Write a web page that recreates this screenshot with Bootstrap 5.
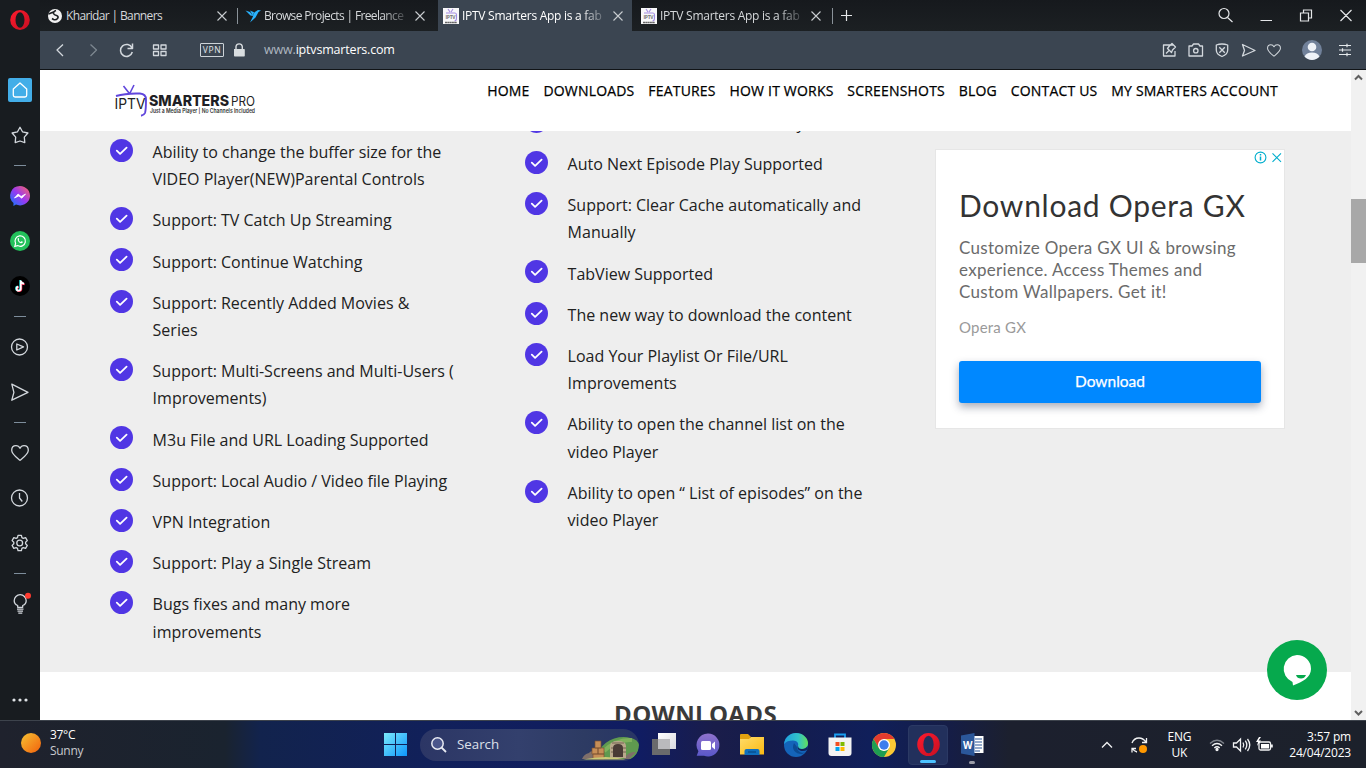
<!DOCTYPE html>
<html lang="en">
<head>
<meta charset="utf-8">
<title>IPTV Smarters App</title>
<link href="https://cdn.jsdelivr.net/npm/bootstrap@5.3.0/dist/css/bootstrap.min.css" rel="stylesheet">
<script src="https://cdn.jsdelivr.net/npm/bootstrap@5.3.0/dist/js/bootstrap.bundle.min.js"></script>
<style>
html,body{height:100%}
body{width:1366px;height:768px;overflow:hidden;font-family:"Open Sans","Noto Sans",sans-serif;background:#181c20}
svg{display:block;flex:none;overflow:visible}
.ln{fill:none;stroke:#d3d8dd;stroke-width:1.3;stroke-linejoin:round}
.browser{height:720px}
.side-bar{width:40px;background:#181c20}
.side-cell{height:45px}
.side-dash{height:15.9px}
.side-dash::after{content:"";width:12px;height:1px;background:#7d8d9b}
.brand-o{height:67.5px;padding-top:10px}
.dots-end{padding-bottom:17px}
.tab-strip{height:31px;background:linear-gradient(#16191d,#1c2023)}
.tab-item{width:198px;padding-left:7px;color:#d5d8da;font-size:12px}
.tab-item.sel{width:194px;margin:0 0 0 2px;padding-left:5px;background:#3b4551;color:#fff}
.tab-item.sel + .tab-item{width:196px;padding-left:9px}
.tab-text{width:143px;margin-left:3px;letter-spacing:-.27px;white-space:nowrap}
.tab-text.tight{letter-spacing:-.64px}
.tab-fade{-webkit-mask-image:linear-gradient(90deg,#000 118px,transparent 147px)}
.tab-rule{width:1px;height:16px;background:#8a9299}
.win-keys{width:154px}
.tool-bar{height:39px;background:#3b4551;border-bottom:1px solid #111417;color:#fff;font-size:12.5px;letter-spacing:-.18px}
.vpn{width:24px;height:14px;border:1px solid #cdd3d8;border-radius:1px;font-size:8.5px;line-height:12px;letter-spacing:.7px;color:#e2e6e9;text-align:center}
.site-head{height:61px;background:#fff}
.menu-row{gap:13.8px;margin:2.5px 49px 0 0}
.menu-link{font-size:14px;letter-spacing:.19px;color:#000;line-height:20px;white-space:nowrap;-webkit-text-stroke:.25px #000}
.feat{height:541px;background:#eee;overflow:hidden}
.feat-list{list-style:none;margin:0;padding:0;font-size:16px;line-height:27.2px;color:#212121}
.feat-list li{padding-bottom:14px;display:flex;white-space:nowrap}
.feat-list .tick{margin:-.2px 19.6px 0 0}
.col-a{margin:7.9px 0 0 70px;width:415px}
.col-b{margin:-21.3px 0 0 0;width:410px}
.ad-box{margin-top:18px;width:350px;height:280px;background:#fff;border:1px solid #e6e6e6;font-family:Lato,sans-serif;padding:0 23px}
.ad-marks{height:14px;margin-right:-23px}
.ad-title{font-size:30px;line-height:36px;margin-top:23px;color:#333;letter-spacing:.73px;white-space:nowrap}
.ad-copy{font-size:17px;line-height:22px;margin-top:14px;color:#6b6b6b;letter-spacing:.3px;white-space:nowrap}
.ad-by{font-size:15px;line-height:20px;margin-top:14px;color:#9a9a9a;letter-spacing:.2px}
.ad-btn{height:42px;margin-top:24px;width:302px;border-radius:3px;background:#0088ff;color:#fff;font-size:15.5px;padding-bottom:1px;box-shadow:0 4px 9px rgba(30,40,70,.38);-webkit-text-stroke:.25px #fff}
.down-head{height:48px;background:#fff;overflow:hidden;color:#3a3a3a;font-weight:700;font-size:24px;line-height:30px;padding-top:27px;text-align:center;letter-spacing:.35px}
.scroller{width:15px;background:#f1f1f1}
.thumb{height:64px;margin-top:116px;background:#a8a8a8}
.chat-fab{position:absolute;left:1267px;top:640px;width:60px;height:60px;z-index:5}
.task-bar{height:48px;border-top:1px solid #3d434c;background:linear-gradient(90deg,#1f222d 0,#1a232f 225px,#12234d 260px,#11205a 430px,#101c62 640px,#1a1d4a 715px,#151c4c 770px,#101f5a 870px,#151d46 950px,#1c202e 1010px,#1c212b 100%);color:#fff;font-size:12px}
.weather{width:373px;padding-left:21px;line-height:16px;letter-spacing:-.3px}
.cell-44{width:44px;height:47px}
.search-pill{width:219px;height:32px;margin:0 3px;border-radius:16px;background:linear-gradient(90deg,#2c3665,#33406d 45%,#2d3b63 75%,#283565);color:#dde0ea;overflow:hidden}
.search-word{font-size:13.3px;margin-left:7px}
.run-cell{width:40px;height:40px;margin:0 2px;border-radius:4px;background:#22305c;border:1px solid #2b3964}
.run-line{position:absolute;left:50%;bottom:1px;transform:translateX(-50%);width:16px;height:3px;border-radius:2px;background:#4cc2ff}
.run-line.idle{width:6px;background:#9a9ca8;bottom:4px}
.tray-text{font-size:12px;line-height:16px;letter-spacing:-.2px}
</style>
</head>
<body>
<svg width="0" height="0" class="position-absolute">
<defs>
<linearGradient id="gOp" x1="0" x2="1" y2="1"><stop offset="0" stop-color="#ff1b2d"/><stop offset="1" stop-color="#c60f22"/></linearGradient>
<linearGradient id="gMs" x1="0" y1="1" x2="1" y2="0"><stop offset="0" stop-color="#0a7cff"/><stop offset=".5" stop-color="#9a38f0"/><stop offset="1" stop-color="#ff6a60"/></linearGradient>
<linearGradient id="gWin" x1="0" y1="0" x2="1" y2="1"><stop offset="0" stop-color="#7be9fb"/><stop offset="1" stop-color="#0d96fb"/></linearGradient>
<linearGradient id="gSun" x1="0" y1="0" x2="1" y2="1"><stop offset="0" stop-color="#f6c233"/><stop offset="1" stop-color="#f2600c"/></linearGradient>
<linearGradient id="gFold" x1="0" y1="0" x2="1" y2="1"><stop offset="0" stop-color="#ffdc6a"/><stop offset="1" stop-color="#fbb912"/></linearGradient>
<linearGradient id="gEdge" x1="0" y1="0" x2="1" y2="0"><stop offset="0" stop-color="#1f9fe0"/><stop offset=".6" stop-color="#32c3c9"/><stop offset="1" stop-color="#63df5a"/></linearGradient>
<linearGradient id="gChat" x1="0" y1="0" x2="0" y2="1"><stop offset="0" stop-color="#8f72cc"/><stop offset="1" stop-color="#5957c9"/></linearGradient>
<linearGradient id="gTv" x1="0" y1="0" x2="1" y2="1"><stop offset="0" stop-color="#fff"/><stop offset="1" stop-color="#d9d9de"/></linearGradient>
<symbol id="tick" viewBox="0 0 23 23"><circle cx="11.5" cy="11.5" r="11.5" fill="#5036e4"/><path d="M6.8 11.7l3.3 3.2 6.5-6.3" fill="none" stroke="#fff" stroke-width="1.8" stroke-linecap="round" stroke-linejoin="round"/></symbol>
<symbol id="xx" viewBox="0 0 10 10"><path d="M.5.5l9 9M9.500 .5l-9 9" fill="none" stroke="#c9cdd0" stroke-width="1.1"/></symbol>
<symbol id="fav" viewBox="0 0 16 16"><path fill="#f8f8fa" d="M0 0h16v16H0z"/><path d="M5 1l2 3M10 1L8 4M3 5h9q1.500 0 1.500 2v3q0 3-2 3" fill="none" stroke="#a48cdf" stroke-width="1.1"/><text x="2.500" y="10.500" font-size="5" font-weight="700" fill="#777" textLength="10">IPTV</text><path d="M2 14.500h12" stroke="#666" stroke-width="1.500" stroke-dasharray="2 .3"/></symbol>
<symbol id="heart" viewBox="0 0 18 16"><path class="ln" d="M9 15.300C5 12 .7 9 .7 5.200.7 2.500 2.600.7 5 .7c1.700 0 3.200.9 4 2.600C9.800 1.600 11.300.7 13 .7c2.400 0 4.300 1.800 4.300 4.500C17.300 9 13 12 9 15.300z"/></symbol>
</defs>
</svg>
<div class="browser d-flex">
  <aside class="side-bar d-flex flex-column">
    <div class="brand-o d-flex justify-content-center"><svg width="20" height="20" viewBox="0 0 20 20"><path fill="url(#gOp)" fill-rule="evenodd" d="M10 0a9.800 10 0 1 0 0 20 9.800 10 0 1 0 0-20zm0 2.300a4.500 7.700 0 1 1 0 15.400 4.500 7.700 0 1 1 0-15.400z"/></svg></div>
    <div class="side-cell d-flex align-items-center justify-content-center"><svg width="24" height="24" viewBox="0 0 24 24"><rect width="24" height="24" rx="2" fill="#43aee8"/><path d="M12 5L5.300 11v6.200q0 1.800 1.800 1.800h9.800q1.800 0 1.800-1.800V11z" fill="none" stroke="#fff" stroke-width="1.300" stroke-linejoin="round"/></svg></div>
    <div class="side-cell d-flex align-items-center justify-content-center"><svg width="18" height="18" viewBox="0 0 18 18"><path class="ln" d="M9 1.200l2.500 4.600 5.400 1.200-3.600 4.100.5 5.500L9 15l-4.800 1.600.5-5.500L1.100 7l5.400-1.200z"/></svg></div>
    <div class="side-dash d-flex align-items-center justify-content-center"></div>
    <div class="side-cell d-flex align-items-center justify-content-center"><svg width="20" height="20" viewBox="0 0 20 20"><path fill="url(#gMs)" d="M10 0a10 9.700 0 1 1-4 18.600L3.400 20l.1-3A9.700 9.700 0 0 1 10 0z"/><path d="M4.500 12l3.600-4 3 2.500L15.500 8l-3.700 4.200-3-2.300z" fill="#fff" stroke="#fff" stroke-width=".8"/></svg></div>
    <div class="side-cell d-flex align-items-center justify-content-center"><svg width="20" height="20" viewBox="0 0 20 20"><circle cx="10" cy="10" r="10" fill="#23c15b"/><path d="M4.800 15.400l.8-2.900a5.200 5.200 0 1 1 2 2.100z" fill="none" stroke="#fff" stroke-width="1.200"/><path d="M7.800 7.200c.8-.5 1 .2 1.300 1 .2.500-.4.700-.3 1 .5 1 1.200 1.500 2 1.700.4 0 .5-.8.900-.6 1.300.5 1.400.8.800 1.500-1.500 1.500-5.700-1.200-4.700-4.600z" fill="#fff"/></svg></div>
    <div class="side-cell d-flex align-items-center justify-content-center"><svg width="20" height="20" viewBox="0 0 20 20"><circle cx="10" cy="10" r="10" fill="#000"/><g fill="none" stroke-width="1.700"><path stroke="#25f4ee" d="M10.200 4v8.500a2.100 2.100 0 1 1-2.500-2.200M10.200 5q1 2 3.300 2.300"/><path stroke="#fe2c55" d="M11.400 5v8.300a2.100 2.100 0 1 1-2.500-2.200M11.400 6q1 2 3.300 2.300"/><path stroke="#fff" d="M10.800 4.400v8.400a2.100 2.100 0 1 1-2.500-2.200M10.800 5q.8 2.500 3.300 2.700"/></g></svg></div>
    <div class="side-dash d-flex align-items-center justify-content-center"></div>
    <div class="side-cell d-flex align-items-center justify-content-center"><svg width="18" height="18" viewBox="0 0 18 18"><circle class="ln" cx="8.500" cy="9" r="8"/><path class="ln" d="M5.800 6l6.700 2.900-6.700 3.100z"/></svg></div>
    <div class="side-cell d-flex align-items-center justify-content-center"><svg width="18" height="18" viewBox="0 0 18 18"><path class="ln" d="M.8 1.200L17 9.300.8 17.200l2.100-7.900z"/></svg></div>
    <div class="side-dash d-flex align-items-center justify-content-center"></div>
    <div class="side-cell d-flex align-items-center justify-content-center"><svg width="18" height="16"><use href="#heart"/></svg></div>
    <div class="side-cell d-flex align-items-center justify-content-center"><svg width="18" height="18" viewBox="0 0 18 18"><circle class="ln" cx="8.500" cy="9" r="8"/><path class="ln" d="M8.500 4v5l2.800 3.500"/></svg></div>
    <div class="side-cell d-flex align-items-center justify-content-center"><svg width="18" height="18" viewBox="0 0 18 18"><circle class="ln" cx="8.700" cy="9" r="2.900"/><path class="ln" d="M7 1.300h3.400l.5 2.300 1.400.8 2.300-.7 1.700 2.900-1.700 1.600v1.600l1.700 1.600-1.700 2.900-2.300-.7-1.400.8-.5 2.300H7l-.5-2.300-1.400-.8-2.300.7-1.700-2.900 1.700-1.600V8.200L1.100 6.600l1.700-2.900 2.300.7 1.400-.8z"/></svg></div>
    <div class="side-dash d-flex align-items-center justify-content-center"></div>
    <div class="side-cell d-flex align-items-center justify-content-center"><svg width="18" height="20" viewBox="0 0 18 20"><path class="ln" d="M6.700 13.300v-1.800C4.500 10.500 3.200 8.900 3.200 6.700a6 6 0 0 1 12 0c0 2.200-1.300 3.800-3.500 4.800v1.800zM6 15.200h6.500M6.500 17.200h5.500M7.300 19.200h4"/><circle cx="17" cy="1.800" r="3" fill="#ff3b30"/></svg></div>
    <div class="mt-auto dots-end d-flex justify-content-center"><svg width="16" height="6"><g fill="#dfe3e6"><circle cx="2" cy="3" r="1.600"/><circle cx="8" cy="3" r="1.600"/><circle cx="14" cy="3" r="1.600"/></g></svg></div>
  </aside>
  <main class="flex-grow-1">
    <div class="tab-strip d-flex align-items-center">
      <div class="tab-item d-flex align-items-center h-100">
        <svg width="16" height="16" viewBox="0 0 16 16"><circle cx="8" cy="8" r="7" fill="#f2f2f2"/><path d="M1.500 6l5-2M9 2.500q-3 1-2.500 3 .7 1.500 3 2 2.500 1 1 3-1.500 1.800-4 1l-1.500-1" fill="none" stroke="#1b1f22" stroke-width="1.700"/></svg>
        <div class="tab-text tight">Kharidar | Banners</div>
        <svg class="ms-2" width="10" height="10"><use href="#xx"/></svg>
        <div class="tab-rule ms-auto"></div>
      </div>
      <div class="tab-item d-flex align-items-center h-100">
        <svg width="16" height="16" viewBox="0 0 16 16"><path fill="#29b2fe" d="M.5 2.500L5 4l3 4-2.500-.5zM5 2.500l4 1.700L8 8zM9.500 4.200L13 2l3 .5-2.500 1.600-3 5.400L5 14.500l2.500-5z"/></svg>
        <div class="tab-text tight tab-fade">Browse Projects | Freelance</div>
        <svg class="ms-2" width="10" height="10"><use href="#xx"/></svg>
      </div>
      <div class="tab-item sel d-flex align-items-center h-100">
        <svg width="16" height="16"><use href="#fav"/></svg>
        <div class="tab-text tab-fade">IPTV Smarters App is a fab</div>
        <svg class="ms-2" width="10" height="10"><use href="#xx"/></svg>
      </div>
      <div class="tab-item d-flex align-items-center h-100">
        <svg width="16" height="16"><use href="#fav"/></svg>
        <div class="tab-text tab-fade">IPTV Smarters App is a fab</div>
        <svg class="ms-2" width="10" height="10"><use href="#xx"/></svg>
      </div>
      <div class="tab-rule ms-1"></div>
      <svg class="ms-2" width="11" height="11"><path d="M5.500 0v11M0 5.500h11" stroke="#e5e7e9" stroke-width="1.200"/></svg>
      <div class="win-keys ms-auto d-flex align-items-center">
        <svg width="134" height="20" viewBox="0 0 134 20"><g fill="none" stroke="#e4e6e8" stroke-width="1.200"><circle cx="12" cy="7.500" r="5"/><path d="M15.500 11.500l5 4.500M48.500 14.500h11.500"/><path d="M88.500 7h8v8h-8zM91.500 7V4h8v8h-3M128.500 4l11 11M139.500 4l-11 11"/></g></svg>
      </div>
    </div>
    <div class="tool-bar d-flex align-items-center">
      <svg width="160" height="18" viewBox="0 0 160 18"><g class="ln"><path d="M23 3.500L17 9l6 6"/><path d="M50.500 3.500l6 5.500-6 6" stroke="#7d8790"/><path stroke-width="1.500" d="M92 7a6 6 0 1 0 .3 4M92.500 2.500v5h-5"/><path d="M113.500 4h5v4h-5zM121 4h5v4h-5zM113.500 10.500h5v4h-5zM121 10.500h5v4h-5z"/></g></svg>
      <div class="vpn">VPN</div>
      <svg class="ms-2" width="14" height="16" viewBox="0 0 14 16"><path fill="#d9dde0" d="M2 7h10q.8 0 .8.800v6q0 .8-.8.800H2.800q-.8 0-.8-.8z"/><path d="M4 7V4.500a3.200 3.200 0 0 1 6.300 0V7" fill="none" stroke="#d9dde0" stroke-width="1.400"/></svg>
      <div class="ps-3 pt-1 pb-1"><span style="color:#aeb7c0;margin-left:2px">www.</span>iptvsmarters.com</div>
      <svg class="ms-auto" width="206" height="24" viewBox="0 0 206 24"><g class="ln" stroke-width="1.100"><path d="M14 7H4.500v11H16v-5M7 15.500l3-3M8.500 10.500l4 4 1-2.500 3-3-3.500-3.500-3 3z" transform="translate(-1)"/><path d="M29 8h3l1.500-2h5l1.500 2h2.500v10H29z"/><circle cx="35.800" cy="12.700" r="2.200"/><path d="M62 6q3 0 5.700 1v5q0 4.500-5.700 6.500-5.700-2-5.700-6.500V7Q59 6 62 6zM59.300 9.300l5.500 5.500M64.800 9.300l-5.500 5.500"/><path d="M82.500 6.500l12.500 6-12.500 5.500 2-5.500z"/></g><use href="#heart" x="107" y="6" width="14" height="13"/><circle cx="152" cy="12" r="10" fill="#71819a"/><circle cx="152" cy="9" r="4.300" fill="#eef2f8"/><path d="M144.500 18.500q2-4 7.500-4t7.500 4a10 10 0 0 1-15 0z" fill="#eef2f8"/><g stroke="#e4e8eb" stroke-width="1.200"><path d="M179 7.500h12M179 12h12M179 16.500h12M187 5.800v3.500M182.500 10.300v3.500M187 14.800v3.500"/></g></svg>
    </div>
    <div class="d-flex">
      <div class="flex-grow-1">
        <header class="site-head d-flex">
          <svg width="220" height="61" viewBox="0 0 220 61"><g fill="none" stroke="#6046dc"><path d="M83.500 16l5.500 7M94 15l-4 8" stroke-width="1.600"/><path d="M76 26q10-3 24-2.500 6 .5 6 6 0 10-1 13.500-.8 2-4 2.700" stroke-width="1.900"/></g><g font-family="Inter,sans-serif"><text x="74.500" y="38.500" font-size="14" textLength="31" fill="#222" lengthAdjust="spacingAndGlyphs">IPTV</text><text x="109" y="35.500" font-size="14.500" font-weight="800" textLength="80" lengthAdjust="spacingAndGlyphs" fill="#1f1f25">SMARTERS</text><text x="191" y="35.500" font-size="12.500" textLength="24" lengthAdjust="spacingAndGlyphs" fill="#222">PRO</text><text x="110" y="42.500" font-size="5.700" font-weight="600" textLength="105" lengthAdjust="spacingAndGlyphs" fill="#333">Just a Media Player | No Channels Included</text></g></svg>
          <nav class="d-flex ms-auto pt-2 pe-4">
            <div class="d-flex menu-row">
              <a class="menu-link text-decoration-none">HOME</a><a class="menu-link text-decoration-none">DOWNLOADS</a><a class="menu-link text-decoration-none">FEATURES</a><a class="menu-link text-decoration-none">HOW IT WORKS</a><a class="menu-link text-decoration-none">SCREENSHOTS</a><a class="menu-link text-decoration-none">BLOG</a><a class="menu-link text-decoration-none">CONTACT US</a><a class="menu-link text-decoration-none">MY SMARTERS ACCOUNT</a>
            </div>
          </nav>
        </header>
        <section class="feat d-flex">
          <ul class="feat-list col-a">
            <li><svg class="tick" width="23" height="23"><use href="#tick"/></svg><span>Ability to change the buffer size for the<br>VIDEO Player(NEW)Parental Controls</span></li>
            <li><svg class="tick" width="23" height="23"><use href="#tick"/></svg>Support: TV Catch Up Streaming</li>
            <li><svg class="tick" width="23" height="23"><use href="#tick"/></svg>Support: Continue Watching</li>
            <li><svg class="tick" width="23" height="23"><use href="#tick"/></svg><span>Support: Recently Added Movies &amp;<br>Series</span></li>
            <li><svg class="tick" width="23" height="23"><use href="#tick"/></svg><span>Support: Multi-Screens and Multi-Users (<br>Improvements)</span></li>
            <li><svg class="tick" width="23" height="23"><use href="#tick"/></svg>M3u File and URL Loading Supported</li>
            <li><svg class="tick" width="23" height="23"><use href="#tick"/></svg>Support: Local Audio / Video file Playing</li>
            <li><svg class="tick" width="23" height="23"><use href="#tick"/></svg>VPN Integration</li>
            <li><svg class="tick" width="23" height="23"><use href="#tick"/></svg>Support: Play a Single Stream</li>
            <li><svg class="tick" width="23" height="23"><use href="#tick"/></svg><span>Bugs fixes and many more<br>improvements</span></li>
          </ul>
          <ul class="feat-list col-b">
            <li><svg class="tick" width="23" height="23"><use href="#tick"/></svg><span style="padding-left:229px">y</span></li>
            <li><svg class="tick" width="23" height="23"><use href="#tick"/></svg>Auto Next Episode Play Supported</li>
            <li><svg class="tick" width="23" height="23"><use href="#tick"/></svg><span>Support: Clear Cache automatically and<br>Manually</span></li>
            <li><svg class="tick" width="23" height="23"><use href="#tick"/></svg>TabView Supported</li>
            <li><svg class="tick" width="23" height="23"><use href="#tick"/></svg>The new way to download the content</li>
            <li><svg class="tick" width="23" height="23"><use href="#tick"/></svg><span>Load Your Playlist Or File/URL<br>Improvements</span></li>
            <li><svg class="tick" width="23" height="23"><use href="#tick"/></svg><span>Ability to open the channel list on the<br>video Player</span></li>
            <li><svg class="tick" width="23" height="23"><use href="#tick"/></svg><span>Ability to open “ List of episodes” on the<br>video Player</span></li>
          </ul>
          <div class="ad-box">
            <div class="ad-marks d-flex justify-content-end align-items-center"><svg width="30" height="13" viewBox="0 0 30 13"><g fill="none" stroke="#00aecd" stroke-width="1.100"><circle cx="6.500" cy="6.500" r="5.400"/><path d="M18.500 2.300l8.500 8.500M27 2.300l-8.500 8.500"/><path stroke-width="1.500" d="M6.500 5.500v4M6.500 3v1.400"/></g></svg></div>
            <div class="ad-title">Download Opera GX</div>
            <div class="ad-copy">Customize Opera GX UI &amp; browsing<br>experience. Access Themes and<br>Custom Wallpapers. Get it!</div>
            <div class="ad-by">Opera GX</div>
            <div class="ad-btn d-flex align-items-center justify-content-center">Download</div>
          </div>
        </section>
        <section class="down-head">DOWNLOADS</section>
      </div>
      <div class="scroller d-flex flex-column">
        <svg width="15" height="13"><path d="M4 9.500L7.500 6l3.500 3.500" fill="none" stroke="#606060" stroke-width="2"/></svg>
        <div class="thumb"></div>
        <svg class="mt-auto" width="15" height="13"><path d="M4 4l3.500 3.500L11 4" fill="none" stroke="#606060" stroke-width="2"/></svg>
      </div>
    </div>
  </main>
</div>
<svg class="chat-fab" viewBox="0 0 60 60"><circle cx="30" cy="30" r="30" fill="#06a94d"/><path d="M30 15a14 14 0 0 1 14 14c0 8-8 13-18 16.500l-.5-3.500A14 14 0 0 1 30 15z" fill="#fff"/><path d="M29 35h10q-1.500 3.500-5 3.500-4 0-5-3.500z" fill="#06a94d"/></svg>
<footer class="task-bar d-flex align-items-center">
  <div class="weather d-flex align-items-center">
    <svg width="20" height="20" class="mb-1"><circle cx="10" cy="10" r="10" fill="url(#gSun)"/></svg>
    <div class="ms-2 pb-1" style="padding-left:1px">37°C<br><span style="color:#c8cace">Sunny</span></div>
  </div>
  <div class="cell-44 d-flex align-items-center justify-content-center"><svg width="23" height="23"><path fill="url(#gWin)" d="M0 0h11v11H0zM12 0h11v11H12zM0 12h11v11H0zM12 12h11v11H12z"/></svg></div>
  <div class="search-pill d-flex align-items-center">
    <svg class="ms-2" width="22" height="20"><circle cx="9.500" cy="8.500" r="5.700" fill="#4b568b" stroke="#e8eaf2" stroke-width="1.500"/><path d="M13.500 12.500l4.500 4.500" stroke="#e8eaf2" stroke-width="1.800"/></svg>
    <span class="search-word">Search</span>
    <svg class="ms-auto mt-2" width="57" height="24" viewBox="0 0 57 24"><path d="M12 22C18 8 28 0 42 0q14 1 15 8 0 10-8 14z" fill="#5f9a4f"/><path d="M22 14Q34 2 50 3" stroke="#8dbb63" stroke-width="4" fill="none" opacity=".7"/><path d="M0 22q2-5 7-6 2-3 4-1l3 7zM42 22q4-8 12-7l-7 7z" fill="#7f6f6a"/><g fill="#c68e57" stroke="#7b5132" stroke-width=".7"><path d="M13 4h6v7h-6zM10 11h6v6h-6zM16 11h6v6h-6zM11 17h11v5H11z"/></g><path d="M28 21V9q0-5 8-5t8 5v12z" fill="#b9a88b"/><path d="M31 20V11q0-4 5-4t5 4v9z" fill="#493b35"/><path d="M30 6l12 0M29 11h2M41 11h3M29 15h2M41 15h3" stroke="#726351"/><path d="M1 22.500q24-5 43 0z" fill="#c9ca77"/></svg>
  </div>
  <div class="cell-44 d-flex align-items-center justify-content-center"><svg width="24" height="23"><path fill="url(#gTv)" d="M6 0h18v16H6z"/><path fill="#6a6a6c" d="M0 6h18v16H0z"/><path fill="#bababd" d="M6 6h12v10H6z"/></svg></div>
  <div class="cell-44 d-flex align-items-center justify-content-center"><svg width="24" height="24" viewBox="0 0 24 24"><path fill="url(#gChat)" d="M12 .5a11.500 11.500 0 1 1-4 22.300H.7l1.700-4.500A11.500 11.500 0 0 1 12 .5z"/><rect x="5" y="8" width="10" height="9" rx="1.500" fill="#fff"/><path d="M16 11l3-2.500v8L16 14z" fill="#fff"/></svg></div>
  <div class="cell-44 d-flex align-items-center justify-content-center"><svg width="24" height="23" viewBox="0 0 24 23"><path fill="#e2a10f" d="M0 2q0-1 1-1h7l2.500 2.500V8H0z"/><path fill="url(#gFold)" d="M0 6h9l2-2h13v17.500H0z"/><path fill="#0f6fbd" d="M4.500 22v-4q0-2 2-2h11q2 0 2 2v4z"/><path d="M8 19h8" stroke="#084f91" stroke-width="1.500"/></svg></div>
  <div class="cell-44 d-flex align-items-center justify-content-center"><svg width="24" height="24" viewBox="0 0 24 24"><circle cx="12" cy="12" r="12" fill="#1464ba"/><path fill="url(#gEdge)" d="M0 11C1 4 6 0 12 0c7 0 12 5 12 10 0 4-3 6-6 6-4 0-5-1.500-4-3.500 1-2-1-5-5-5-4 0-7 1-9 3.500z"/><path fill="#0b4b94" d="M10 10c-3 6 1 11 8 11l4-2c-3 2-9 0-9-5z"/><path fill="#11255d" d="M14 12.500c-1.500 3 1 5.500 4.500 5.500q3 0 4.800-1.500L24 20l-.5-7q-1.500 3-5.500 3-4 0-4-3.500z"/></svg></div>
  <div class="cell-44 d-flex align-items-center justify-content-center"><svg width="24" height="24" viewBox="0 0 24 24"><path d="M7 5V1.500h10V5" fill="none" stroke="#1a9ff1" stroke-width="1.800"/><path d="M.5 4.500h23V20q0 3-3 3h-17q-3 0-3-3z" fill="#f3f3f3"/><path fill="#f25022" d="M7.500 9h4v4h-4z"/><path fill="#7fba00" d="M12.500 9h4v4h-4z"/><path fill="#00a4ef" d="M7.500 14h4v4h-4z"/><path fill="#ffb900" d="M12.500 14h4v4h-4z"/></svg></div>
  <div class="cell-44 d-flex align-items-center justify-content-center"><svg width="24" height="24" viewBox="0 0 24 24"><circle cx="12" cy="12" r="12" fill="#fcc934"/><path fill="#e33b2e" d="M1.600 6A12 12 0 0 1 22.400 6H12l-5.200 9z"/><path fill="#1e9e52" d="M1.600 6l5.200 9L12 18l5.200-3L12 24A12 12 0 0 1 1.600 6z"/><circle cx="12" cy="12" r="6" fill="#fff"/><circle cx="12" cy="12" r="4.700" fill="#3b7ded"/></svg></div>
  <div class="run-cell position-relative d-flex align-items-center justify-content-center"><svg width="23" height="23" viewBox="0 0 20 20"><path fill="url(#gOp)" fill-rule="evenodd" d="M10 0a9.800 10 0 1 0 0 20 9.800 10 0 1 0 0-20zm0 2.300a4.500 7.700 0 1 1 0 15.400 4.500 7.700 0 1 1 0-15.400z"/></svg><i class="run-line"></i></div>
  <div class="cell-44 position-relative d-flex align-items-center justify-content-center"><svg width="23" height="23" viewBox="0 0 23 23"><path fill="#fff" d="M12 3h10.500v17H12z"/><path d="M14 6h7M14 9h7M14 12h7M14 15h7M14 18h5" stroke="#2b579a" stroke-width="1.200"/><path fill="#2b579a" d="M0 2.500L13.500 0v23L0 20.500z"/><text x="2" y="15.500" font-size="11" font-weight="700" fill="#fff" textLength="9.500" lengthAdjust="spacingAndGlyphs">W</text></svg><i class="run-line idle"></i></div>
  <div class="ms-auto d-flex align-items-center">
    <svg width="50" height="20" viewBox="0 0 50 20"><g fill="none" stroke="#f1f2f3" stroke-width="1.300"><path d="M1 12.500l5-5 5 5"/><path d="M31 8q2-5 7-5 4 0 7 4M45.500 3v4.500H41M36 17q-3-.5-4.500-3.500M31 17.500v-4h4"/></g><circle cx="42" cy="14" r="4" fill="#ff9800"/></svg>
    <div class="tray-text text-center ms-2 ps-2">ENG<br>UK</div>
    <svg class="ms-3" width="66" height="18" viewBox="-2 0 66 18"><g fill="none" stroke="#f1f2f3" stroke-width="1.300"><path d="M1 7.500q7-6.500 14 0" stroke="#7d828a"/><path d="M3 9.700q5-4.500 10 0M5.300 12q2.700-2.500 5.400 0"/><circle cx="8" cy="13.500" r="1" fill="#fff"/><path d="M24.500 7h3L31.500 3v12l-4-4h-3zM34 6.500q1.500 2.500 0 5M36.300 4.700q3 4.300 0 8.600M38.500 3q4.500 6 0 12"/><rect x="50" y="6" width="11.500" height="8" rx="1.500"/><path d="M62.800 8.500v3" stroke-width="2"/></g><path fill="#fff" d="M52 8h8v4.500h-8zM50 1l-3 5h2l-1 4 4-5.500h-2.500L52 1z"/></svg>
    <div class="tray-text text-end ms-3" style="padding-right:15px">3:57 pm<br>24/04/2023</div>
  </div>
</footer>
</body>
</html>
